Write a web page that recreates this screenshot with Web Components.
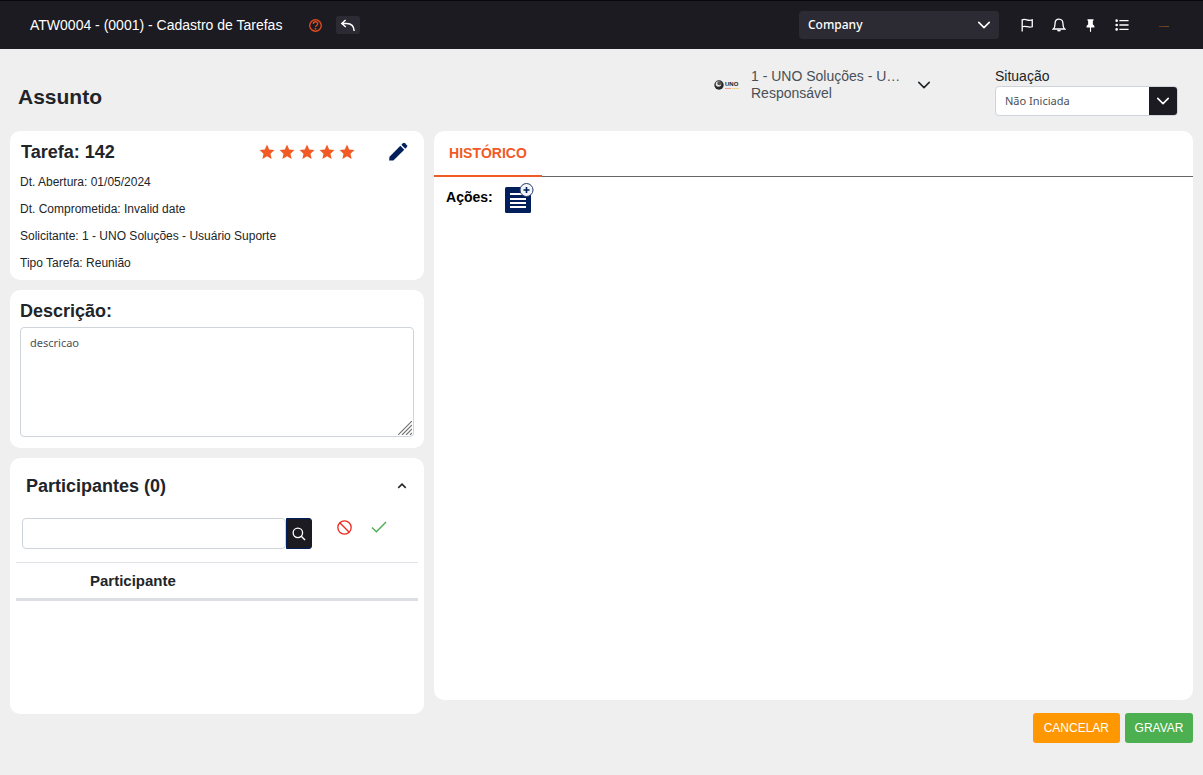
<!DOCTYPE html>
<html lang="pt-BR">
<head>
<meta charset="utf-8">
<meta name="viewport" content="width=device-width, initial-scale=1">
<title>Cadastro de Tarefas</title>
<style>
  html, body { margin: 0; min-height: 100%; }
  body {
    background: #efefef;
    color: #212529;
    font: 14px/17px "Liberation Sans", Arial, sans-serif;
    --dark: #1c1b21;
    --panel: #2c2b33;
    --accent: #f15a24;
    --navy: #001f5b;
    --line: #ced4da;
    --ui-font: "Noto Sans", "Open Sans", sans-serif;
  }
</style>
</head>
<body>
<task-app></task-app>
<script>
const define = (name, html, setup) => {
  const template = document.createElement('template');
  template.innerHTML = `<style>
    *, *::before, *::after { box-sizing: border-box; }
    button { font: inherit; color: inherit; border: 0; padding: 0; background: none; cursor: pointer; }
    svg { display: block; flex: none; }
  </style>` + html;
  customElements.define(name, class extends HTMLElement {
    constructor() {
      super();
      this.attachShadow({ mode: 'open' }).append(template.content.cloneNode(true));
    }
    connectedCallback() { if (setup) setup(this); }
  });
};

const ICONS = {
  help: '<circle cx="8" cy="8" r="7.1" fill="none" stroke="currentColor" stroke-width="1.7"/><path d="M5.3 6.1c0-1.7 1.1-2.7 2.7-2.7s2.8 1 2.8 2.5c0 2.1-2.7 2-2.7 4" fill="none" stroke="currentColor" stroke-width="1.6"/><circle cx="8" cy="11.9" r="1.1"/>',
  reply: '<path d="M5.6 3 1.8 6.500 5.8 10M2 6.500h4.700c4.300 0 7.200 2.500 7.500 7.500" fill="none" stroke="currentColor" stroke-width="1.5"/>',
  down: '<path d="m2 5 6 6 6-6" fill="none" stroke="currentColor" stroke-width="1.8" stroke-linecap="round" stroke-linejoin="round"/>',
  up: '<path d="m3 10.500 5-5 5 5" fill="none" stroke="currentColor" stroke-width="2"/>',
  flag: '<path d="M2.500 15.500V1.300M2.500 2.200c4-2.200 6 1.800 11.500 0V10c-5 2-7-2-11.500 0" fill="none" stroke="currentColor" stroke-width="1.5"/>',
  bell: '<path d="M8 1.200c-3 0-4.500 2.200-4.500 5 0 3.800-.7 5.200-2 6.400h13c-1.300-1.200-2-2.600-2-6.400 0-2.800-1.500-5-4.500-5Z" fill="none" stroke="currentColor" stroke-width="1.5"/><path d="M5.800 13.300a2.200 2.200 0 0 0 4.400 0z"/>',
  pin: '<path d="M4.100.7A.5.500 0 0 1 4.600.2h6.800a.5.500 0 0 1 .5.500c0 .9-.4 1.500-1 1.900v4.300c1.400.8 2 1.800 2 3.200v.4H8.700v4.800L8 16.200l-.7-.9v-4.800H3.100v-.4c0-1.400.6-2.400 2-3.200V2.600c-.6-.4-1-1-1-1.900Z"/>',
  list: '<path d="M5 3h10.500M5 8h10.500M5 13h10.500" stroke="currentColor" stroke-width="1.7"/><circle cx="1.900" cy="3" r="1.500"/><circle cx="1.900" cy="8" r="1.500"/><circle cx="1.900" cy="13" r="1.500"/>',
  search: '<circle cx="6.700" cy="6.700" r="5.400" fill="none" stroke="currentColor" stroke-width="1.500"/><path d="m10.600 10.600 4.300 4.300" stroke="currentColor" stroke-width="1.600"/>',
  ban: '<circle cx="8" cy="8" r="7.100" fill="none" stroke="currentColor" stroke-width="1.400"/><path d="m3 3 10 10" stroke="currentColor" stroke-width="1.400"/>',
  check: '<path d="m1 8.500 4.400 4.300L15 3" fill="none" stroke="currentColor" stroke-width="1.400"/>',
  star: '<path d="M8 .6 10.200 5.500l5.200.6-3.900 3.600 1.100 5.300L8 12.300 3.400 15l1.100-5.300L.6 6.100l5.200-.6Z"/>',
  pencil: '<path d="M1.200 11.700 9.900 3l3.100 3.100-8.700 8.700H.9Z"/><path d="m10.700 2.200 1.300-1.300a1.100 1.100 0 0 1 1.500 0l1.600 1.600a1.100 1.100 0 0 1 0 1.500l-1.300 1.300Z"/>'
};
define('ui-icon', `<style>
  :host { display: inline-flex; flex: none; }
</style><svg viewBox="0 0 16 16" fill="currentColor" aria-hidden="true"></svg>`, el => {
  const svg = el.shadowRoot.querySelector('svg');
  const size = el.getAttribute('size') || 16;
  svg.setAttribute('width', size);
  svg.setAttribute('height', size);
  svg.innerHTML = ICONS[el.getAttribute('name')];
});

define('ui-card', `<style>
  :host { display: block; background: #fff; border-radius: 10px; min-width: 0; }
</style><slot></slot>`);

define('app-header', `<style>
  :host { display: block; background: var(--dark); color: #fff; border-top: 1px solid #09090b; }
  header { display: flex; align-items: center; height: 48px; padding: 0 34px 0 30px; }
  h1 { font-size: 14px; line-height: 20px; font-weight: 400; margin: 0; min-width: 259px; white-space: nowrap; }
  button { display: grid; place-items: center; }
  .help { color: #e04a1f; margin-left: 20px; }
  .back { background: var(--panel); border-radius: 3px; width: 24px; height: 18px; margin-left: 14px; }
  .company { display: grid; align-items: center; width: 200px; margin-left: auto; }
  .company > * { grid-area: 1 / 1; }
  select { appearance: none; width: 100%; height: 28px; padding: 0 32px 0 9px; border: 0; border-radius: 4px;
    background: var(--panel); color: #fff; font: 500 12px/18px var(--ui-font); }
  .company ui-icon { justify-self: end; margin-right: 8px; pointer-events: none; }
  nav { display: flex; align-items: center; gap: 18px; margin-left: 21px; }
  .user { width: 10px; height: 1px; margin: 2px 0 0 12px; background: linear-gradient(90deg, #7c2c18, #665022); }
</style>
<header>
  <h1>ATW0004 - (0001) - Cadastro de Tarefas</h1>
  <button class="help" aria-label="Ajuda"><ui-icon name="help" size="13"></ui-icon></button>
  <button class="back" aria-label="Voltar"><ui-icon name="reply"></ui-icon></button>
  <div class="company">
    <select aria-label="Empresa"><option>Company</option></select>
    <ui-icon name="down" size="14"></ui-icon>
  </div>
  <nav>
    <button aria-label="Marcadores"><ui-icon name="flag" size="14"></ui-icon></button>
    <button aria-label="Notificações"><ui-icon name="bell" size="14"></ui-icon></button>
    <button aria-label="Fixar"><ui-icon name="pin" size="13"></ui-icon></button>
    <button aria-label="Menu"><ui-icon name="list" size="14"></ui-icon></button>
    <button class="user" aria-label="Perfil"></button>
  </nav>
</header>`);

define('responsible-picker', `<style>
  :host { display: block; }
  button { display: flex; align-items: center; text-align: left; color: #495057; }
  .text { width: 150px; margin: 0 16px 0 10px; line-height: 17px; }
  .text span { display: block; white-space: nowrap; }
  ui-icon { color: #212529; }
</style>
<button>
  <svg width="27" height="12" viewBox="0 0 27 12" aria-hidden="true">
    <circle cx="5" cy="6" r="4.700" fill="#292929"/>
    <circle cx="4.500" cy="5" r="2.800" fill="#e5e5e5"/>
    <circle cx="5.300" cy="4.300" r="2" fill="#555"/>
    <text x="11" y="7" font-size="6" font-weight="700" fill="#222">UNO</text>
    <path d="M11 9.500h6" stroke="#f2a08a"/><path d="M18 9.500h7" stroke="#efd58d"/>
  </svg>
  <span class="text"><span>1 - UNO Soluções - U…</span><span>Responsável</span></span>
  <ui-icon name="down" size="14"></ui-icon>
</button>`);

define('status-select', `<style>
  :host { display: block; width: 183px; }
  label { display: block; line-height: 18px; margin-bottom: 1px; }
  .box { display: grid; border: 1px solid var(--line); border-radius: 4px; background: #fff; height: 30px; overflow: hidden; }
  .box > * { grid-area: 1 / 1; }
  select { appearance: none; border: 0; background: none; width: 100%; padding: 0 36px 0 9px; color: #495057; font: 11px/18px var(--ui-font); }
  .arrow { justify-self: end; width: 28px; display: grid; place-items: center; background: var(--dark); color: #fff; pointer-events: none; }
</style>
<label for="status">Situação</label>
<div class="box">
  <select id="status"><option>Não Iniciada</option></select>
  <span class="arrow"><ui-icon name="down" size="14"></ui-icon></span>
</div>`);

define('star-rating', `<style>
  :host { display: flex; gap: 4px; color: var(--accent); }
</style>` + '<ui-icon name="star"></ui-icon>'.repeat(5));

define('task-summary', `<style>
  :host { display: block; padding: 5px 10px 3px; }
  header { display: flex; align-items: center; height: 32px; padding: 0 6px 0 1px; margin-bottom: 1px; }
  h2 { font-size: 18px; line-height: 24px; margin: 0 auto 0 0; }
  button { margin-left: 33px; color: var(--navy); display: grid; }
  p { margin: 0; font-size: 12px; line-height: 27px; }
</style>
<header>
  <h2>Tarefa: 142</h2>
  <star-rating></star-rating>
  <button aria-label="Editar"><ui-icon name="pencil" size="20"></ui-icon></button>
</header>
<p>Dt. Abertura: 01/05/2024</p>
<p>Dt. Comprometida: Invalid date</p>
<p>Solicitante: 1 - UNO Soluções - Usuário Suporte</p>
<p>Tipo Tarefa: Reunião</p>`);

define('task-description', `<style>
  :host { display: block; padding: 5px 10px 11px; }
  label { display: block; font-size: 18px; line-height: 32px; font-weight: 700; }
  .box { display: grid; }
  .box > * { grid-area: 1 / 1; }
  textarea { width: 100%; height: 110px; resize: none; border: 1px solid var(--line); border-radius: 4px;
    padding: 6px 9px; color: #495057; background: #fff; font: 11px/18px var(--ui-font); }
  svg { place-self: end; margin: 0 2px 2px 0; pointer-events: none; }
</style>
<label for="desc">Descrição:</label>
<div class="box">
  <textarea id="desc">descricao</textarea>
  <svg width="14" height="14" viewBox="0 0 14 14" stroke="#777" stroke-width="1.200" aria-hidden="true">
    <path d="M0 14 14 0M4 14 14 4M8 14l6-6M12 14l2-2"/>
  </svg>
</div>`);

define('task-participants', `<style>
  :host { display: block; padding: 12px 6px 0; min-height: 256px; }
  header { display: flex; align-items: center; justify-content: space-between; height: 32px; padding: 0 10px; }
  h2 { font-size: 18px; line-height: 24px; margin: 0; }
  header button { display: grid; }
  .row { display: flex; align-items: flex-start; margin: 16px 6px 13px; }
  input { flex: 0 0 264px; height: 31px; border: 1px solid var(--line); border-radius: 4px; padding: 0 9px; background: #fff; font: 11px/18px var(--ui-font); }
  .row button { display: grid; place-items: center; }
  .search { width: 26px; height: 31px; background: var(--dark); border: 1px solid var(--navy); border-radius: 0 3px 3px 0; color: #fff; }
  .clear { height: 18px; margin-left: 25px; color: #ee2a1e; }
  .confirm { height: 18px; margin-left: 19px; color: #4caf50; }
  table { width: 100%; border-collapse: separate; border-spacing: 0; }
  th { height: 39px; padding: 0; text-align: left; border-top: 1px solid #dee2e6; border-bottom: 3px solid #dbdfe3; font-size: 15px; line-height: 18px; }
  .mark { width: 74px; }
</style>
<header>
  <h2>Participantes (0)</h2>
  <button aria-label="Recolher"><ui-icon name="up" size="12"></ui-icon></button>
</header>
<div class="row">
  <input type="text" aria-label="Participante">
  <button class="search" aria-label="Pesquisar"><ui-icon name="search" size="14"></ui-icon></button>
  <button class="clear" aria-label="Cancelar"><ui-icon name="ban" size="15"></ui-icon></button>
  <button class="confirm" aria-label="Confirmar"><ui-icon name="check"></ui-icon></button>
</div>
<table><thead><tr><th class="mark"></th><th>Participante</th></tr></thead></table>`);

define('task-history', `<style>
  :host { display: block; min-height: 569px; }
  .tabs { display: flex; height: 46px; box-shadow: inset 0 -1px #666; }
  .tabs button { padding: 0 15px; color: var(--accent); font-weight: 700; border-bottom: 2px solid var(--accent); }
  .actions { display: flex; align-items: flex-start; gap: 12px; padding: 6px 12px; color: #000; font-weight: 700; }
  .actions span { line-height: 28px; }
  .actions button { display: block; }
</style>
<div class="tabs" role="tablist"><button role="tab" aria-selected="true">HISTÓRICO</button></div>
<div class="actions">
  <span>Ações:</span>
  <button aria-label="Adicionar ação">
    <svg width="30" height="30" viewBox="0 0 30 30" aria-hidden="true">
      <rect y="4" width="26" height="26" rx="1.500" fill="#001f5b"/>
      <path d="M5 11h16M5 16h16M5 20h16M5 24h16" stroke="#fff" stroke-width="2"/>
      <circle cx="21.500" cy="7" r="6.500" fill="#f4f5f8" stroke="#253b70"/>
      <path d="M18.500 7h6M21.500 4v6" stroke="#001f5b" stroke-width="1.600"/>
    </svg>
  </button>
</div>`);

define('task-app', `<style>
  :host { display: block; }
  .top { display: flex; align-items: flex-start; height: 82px; padding: 18px 25px 0 18px; }
  h1 { font-size: 21px; line-height: 26px; margin: 17px auto 0 0; }
  responsible-picker { margin-top: 1px; }
  status-select { margin-left: 64px; }
  main { display: flex; align-items: flex-start; gap: 10px; padding: 0 10px 32px; }
  .left { flex: 0 0 35%; min-width: 0; display: grid; gap: 10px; }
  .right { flex: 1; min-width: 0; }
  footer { display: flex; justify-content: flex-end; gap: 5px; margin-top: 13px; }
  footer button { height: 30px; padding: 0 11px; border-radius: 3px; color: #fff; font-size: 12px; }
  .cancel { background: #ff9800; }
  footer .save { min-width: 68px; padding: 0 9px; background: #4caf50; }
</style>
<app-header></app-header>
<div class="top">
  <h1>Assunto</h1>
  <responsible-picker></responsible-picker>
  <status-select></status-select>
</div>
<main>
  <div class="left">
    <ui-card><task-summary></task-summary></ui-card>
    <ui-card><task-description></task-description></ui-card>
    <ui-card><task-participants></task-participants></ui-card>
  </div>
  <div class="right">
    <ui-card><task-history></task-history></ui-card>
    <footer><button class="cancel">CANCELAR</button><button class="save">GRAVAR</button></footer>
  </div>
</main>`);
</script>
</body>
</html>
